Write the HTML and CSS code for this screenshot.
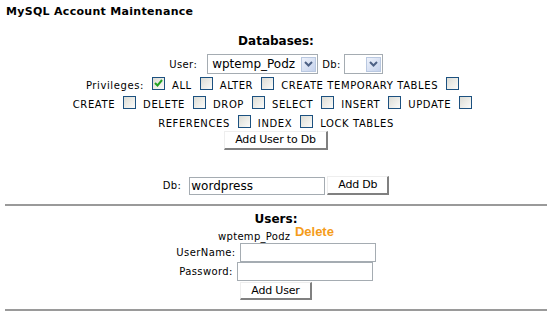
FILE: index.html
```html
<!DOCTYPE html>
<html lang="en">
<head>
    <meta charset="UTF-8">
    <title>MySQL Account Maintenance</title>
    <link rel="stylesheet" href="styles.css">
</head>
<body>
<div class="page-title">MySQL Account Maintenance</div>

<!-- Bases de datos -->
<div class="section">
    <h2>Databases:</h2>
    <div class="row">
        <span class="lbl">User:</span>
        <span class="select wide"><span class="sel-text">wptemp_Podz</span><span class="sel-btn"><svg width="9" height="6" viewBox="0 0 9 6"><path d="M1 1 L4.5 4.5 L8 1" fill="none" stroke="#4d6185" stroke-width="2"/></svg></span></span>
        <span class="lbl">Db:</span>
        <span class="select narrow"><span class="sel-text"></span><span class="sel-btn"><svg width="9" height="6" viewBox="0 0 9 6"><path d="M1 1 L4.5 4.5 L8 1" fill="none" stroke="#4d6185" stroke-width="2"/></svg></span></span>
    </div>
    <div class="privs">
        <div class="line">Privileges:<span class="cb checked"><svg width="11" height="11" viewBox="0 0 11 11"><path d="M2 5 L4.5 7.5 L9 2" fill="none" stroke="#21a121" stroke-width="2"/></svg></span>ALL<span class="cb"></span>ALTER<span class="cb"></span>CREATE TEMPORARY TABLES<span class="cb"></span></div>
        <div class="line">CREATE<span class="cb"></span>DELETE<span class="cb"></span>DROP<span class="cb"></span>SELECT<span class="cb"></span>INSERT<span class="cb"></span>UPDATE<span class="cb"></span></div>
        <div class="line">REFERENCES<span class="cb"></span>INDEX<span class="cb"></span>LOCK TABLES</div>
    </div>
    <button class="btn">Add User to Db</button>

    <div class="row newdb">
        <span class="lbl">Db:</span>
        <input type="text" class="text-input db-input" value="wordpress">
        <button class="btn">Add Db</button>
    </div>
</div>

<hr>

<!-- Usuarios -->
<div class="section users">
    <h2>Users:</h2>
    <div class="user-item">wptemp_Podz <a class="delete" href="#">Delete</a></div>
    <div class="row field">
        <span class="lbl">UserName:</span>
        <input type="text" class="text-input">
    </div>
    <div class="row field">
        <span class="lbl">Password:</span>
        <input type="password" class="text-input">
    </div>
    <button class="btn">Add User</button>
</div>

<hr class="last">
</body>
</html>
```

FILE: styles.css
```css
body {
    font-family: Verdana, "DejaVu Sans", sans-serif;
    font-size: 10px;
    color: black;
    background: #fff;
    margin: 0;
    padding: 5px 5px 0 5px;
    -webkit-font-smoothing: none;
}

.page-title {
    font-weight: bold;
    font-size: 11px;
    letter-spacing: 0.3px;
    padding-left: 1px;
    line-height: 14px;
}

/* Secciones */
.section {
    text-align: center;
}

.section h2 {
    font-size: 12px;
    margin: 14px 0 5px 0;
    line-height: 16px;
}

.row {
    display: flex;
    justify-content: center;
    align-items: center;
    gap: 4px;
}

.lbl {
    font-size: 10px;
    letter-spacing: 0.4px;
}

/* Lista desplegable estilo XP */
.select {
    display: inline-flex;
    align-items: center;
    justify-content: space-between;
    height: 20px;
    box-sizing: border-box;
    border: 1px solid #a5acb2;
    padding: 1px;
    background: #fff;
}

.select.wide {
    width: 111px;
    margin-left: 6px;
}

.select.narrow {
    width: 39px;
    margin-left: -1px;
}

.sel-text {
    font-size: 12px;
    padding-left: 3px;
}

.sel-btn {
    width: 15px;
    height: 15px;
    box-sizing: border-box;
    border: 1px solid #b9c8e0;
    background: linear-gradient(135deg, #eef2fb, #c5d2ec);
    display: flex;
    align-items: center;
    justify-content: center;
}

/* Privilegios */
.privs {
    margin-top: 2px;
    letter-spacing: 0.6px;
}

.line {
    line-height: 19px;
    height: 19px;
    white-space: nowrap;
}

.line:last-child {
    height: 17px;
}

.cb {
    display: inline-block;
    width: 13px;
    height: 13px;
    box-sizing: border-box;
    border: 1px solid #1c5180;
    background: linear-gradient(135deg, #dcdcd5, #fbfbf9);
    vertical-align: -1px;
    margin: 0 7px 0 8px;
    position: relative;
}

.cb svg {
    position: absolute;
    left: 0;
    top: 0;
}

/* Botones */
.btn {
    font-family: Verdana, "DejaVu Sans", sans-serif;
    font-size: 11px;
    letter-spacing: -0.2px;
    color: #000;
    background: #fff;
    border: 1px solid #eee;
    border-right: 2px solid #808080;
    border-bottom: 2px solid #808080;
    padding: 0 10px;
    height: 19px;
    line-height: 16px;
    margin: 0;
}

.newdb {
    margin-top: 26px;
    gap: 0;
}

.newdb .lbl {
    margin-right: 8px;
}

.text-input {
    font-family: Verdana, "DejaVu Sans", sans-serif;
    font-size: 12px;
    border: 1px solid #a5acb2;
    height: 18px;
    box-sizing: border-box;
    padding: 0 1px;
    margin: 0;
}

.db-input {
    width: 136px;
    margin-right: 2px;
}

hr {
    border: 0;
    border-top: 2px solid #9a9a9a;
    margin: 9px 0 0 0;
}

/* Usuarios */
.users h2 {
    margin: 5px 0 0 0;
}

.user-item {
    height: 13px;
    padding-top: 3px;
    line-height: 14px;
    letter-spacing: 0.3px;
}

.delete {
    color: #f59c1a;
    font-weight: bold;
    font-family: Arial, "Liberation Sans", sans-serif;
    font-size: 13px;
    line-height: 0;
    text-decoration: none;
    vertical-align: 4px;
    letter-spacing: 0;
    margin-left: 1px;
}

.field .text-input {
    width: 136px;
    height: 19px;
}

.users .btn {
    margin-top: 1px;
    height: 18px;
}

hr.last {
    margin-top: 9px;
}
```
